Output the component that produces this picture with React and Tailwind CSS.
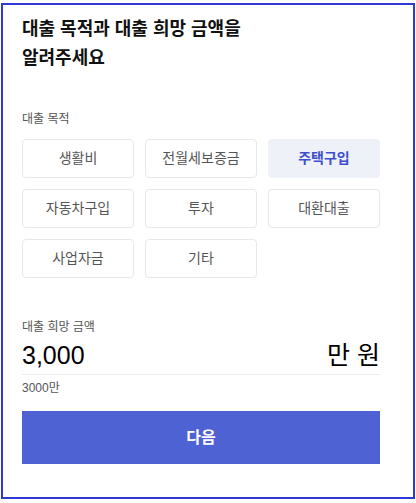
import React from "react";

const purposes = ["생활비", "전월세보증금", "주택구입", "자동차구입", "투자", "대환대출", "사업자금", "기타"];

export default function App() {
  return (
    <div className="w-[416px] h-[503px] bg-white" style={{ fontFamily: '"Liberation Sans", "Noto Sans CJK KR", sans-serif' }}>
      <div className="ml-[1px] mt-[3px] w-[414px] h-[496px] border-2 border-[#3238d4] bg-white pl-[19px] pr-[33px] pt-[10px]">
        <h1 className="text-[18px] font-bold leading-[29px] text-[#111]">
          대출 목적과 대출 희망 금액을
          <br />
          알려주세요
        </h1>
        <div className="mt-[38px] text-[12px] leading-[16px] text-[#555]">대출 목적</div>
        <div className="mt-[12px] grid grid-cols-3 gap-x-[11px] gap-y-[11px]">
          {purposes.map((p) => {
            const sel = p === "주택구입";
            return (
              <div
                key={p}
                className={
                  sel
                    ? "h-[39px] rounded-[4px] border border-[#eef1f8] bg-[#eef1f8] flex items-center justify-center text-[14px] font-bold text-[#3f4fcb]"
                    : "h-[39px] rounded-[4px] border border-[#e6e8eb] bg-white flex items-center justify-center text-[14px] text-[#555]"
                }
              >
                {p}
              </div>
            );
          })}
        </div>
        <div className="mt-[41px] text-[12px] leading-[16px] text-[#555]">대출 희망 금액</div>
        <div className="mt-[5px] flex items-center justify-between border-b border-[#ebebeb] pb-[4px]">
          <span className="text-[25px] leading-[30px] text-black">3,000</span>
          <span className="text-[25px] leading-[30px] text-black">만 원</span>
        </div>
        <div className="mt-[5px] text-[12px] leading-[16px] text-[#555]">3000만</div>
        <button className="mt-[15px] w-full h-[53px] bg-[#4e62d3] text-white text-[16px] font-bold flex items-center justify-center">
          다음
        </button>
      </div>
    </div>
  );
}
